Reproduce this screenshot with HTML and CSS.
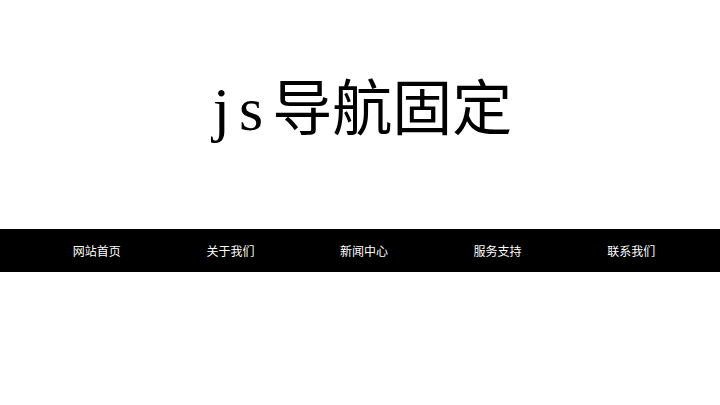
FILE: index.html
```html
<!DOCTYPE html>
<html lang="zh-CN">
<head>
<meta charset="utf-8">
<title>js导航固定</title>
<link rel="stylesheet" href="styles.css">
</head>
<body>
<header class="banner">
  <h1 class="title"><span class="latin">js</span>导航固定</h1>
</header>
<nav class="nav">
  <ul class="nav-list">
    <li class="nav-item"><a href="#">网站首页</a></li>
    <li class="nav-item"><a href="#">关于我们</a></li>
    <li class="nav-item"><a href="#">新闻中心</a></li>
    <li class="nav-item"><a href="#">服务支持</a></li>
    <li class="nav-item"><a href="#">联系我们</a></li>
  </ul>
</nav>
<main class="content"></main>
</body>
</html>
```
FILE: styles.css
```css
html, body {
  margin: 0;
  padding: 0;
  background: #fff;
}
body {
  font-family: "Noto Sans CJK SC", "Liberation Serif", serif;
}
.banner {
  height: 229px;
  box-sizing: border-box;
  padding-top: 74px;
}
.title {
  margin: 0;
  font-size: 60px;
  line-height: 60px;
  font-weight: normal;
  text-align: center;
  color: #000;
  font-family: "Noto Sans CJK SC", serif;
}
.latin {
  font-family: "Liberation Serif", serif;
  font-size: 62px;
  letter-spacing: 9px;
  padding-left: 5px;
}
.nav {
  background: #000;
  height: 43px;
}
.nav-list {
  list-style: none;
  margin: 0;
  padding: 0 22px 0 30px;
  display: flex;
  height: 43px;
}
.nav-item {
  flex: 1;
  text-align: center;
  line-height: 43px;
  font-size: 12px;
}
.nav-item a {
  color: #fff;
  text-decoration: none;
}
.content {
  height: 600px;
}
```
